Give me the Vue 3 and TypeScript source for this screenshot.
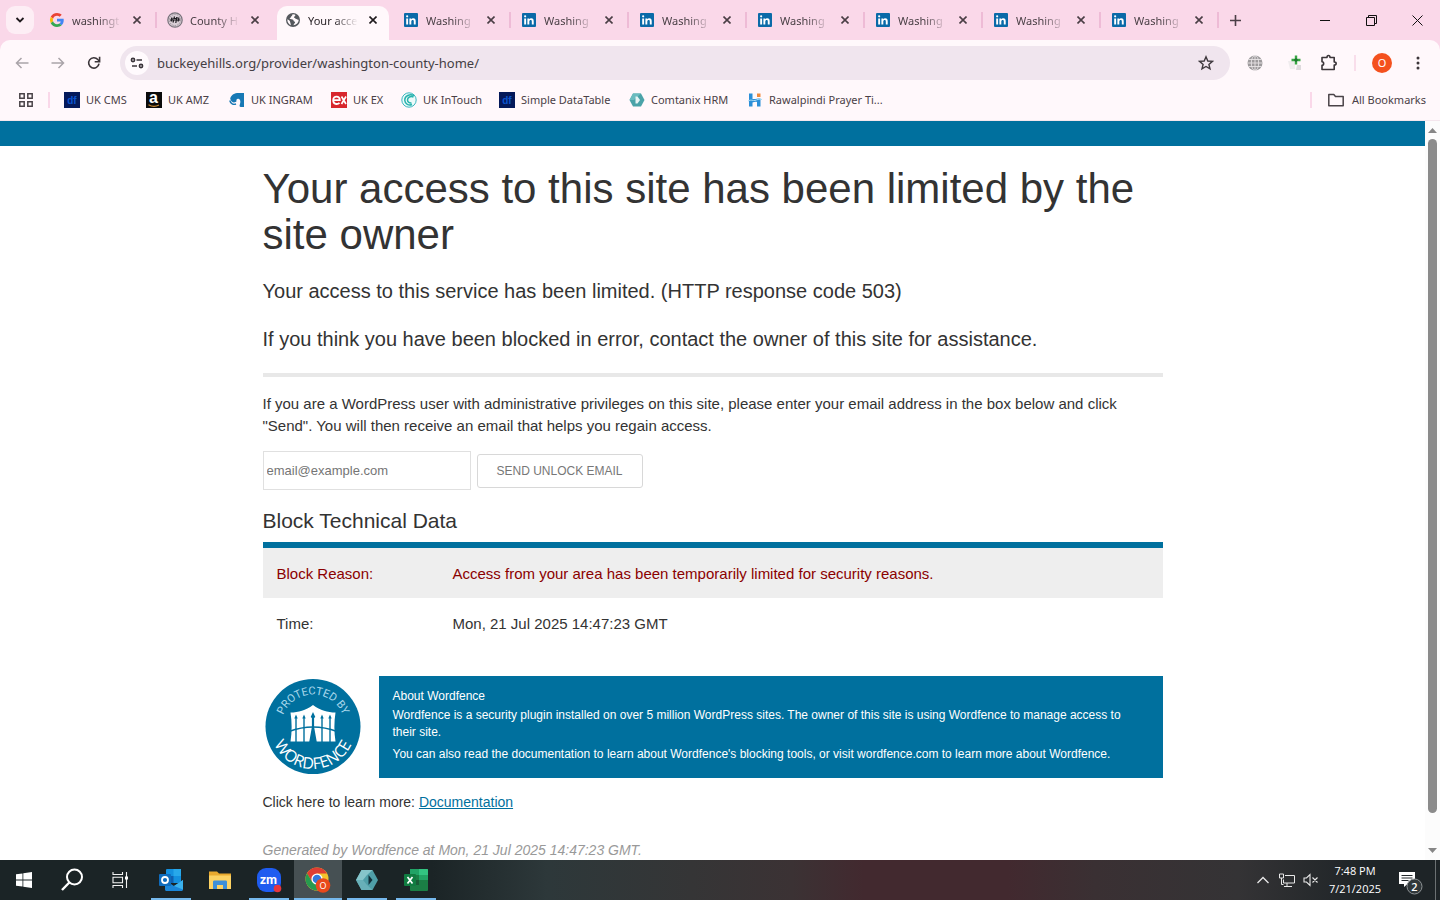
<script setup lang="ts">
import { ref } from 'vue'

interface Tab {
  id: number
  title: string
  icon: 'google' | 'county' | 'globe' | 'linkedin'
}

const tabs: Tab[] = [
  { id: 1, title: 'washingt', icon: 'google' },
  { id: 2, title: 'County H', icon: 'county' },
  { id: 3, title: 'Your acce', icon: 'globe' },
  ...Array.from({ length: 7 }, (_, i) => ({ id: i + 4, title: 'Washing', icon: 'linkedin' as const })),
]
const activeTab = ref(3)

interface Bookmark {
  label: string
  icon: 'df' | 'amazon' | 'ingram' | 'ex' | 'intouch' | 'hex' | 'prayer'
}

const bookmarks: Bookmark[] = [
  { label: 'UK CMS', icon: 'df' },
  { label: 'UK AMZ', icon: 'amazon' },
  { label: 'UK INGRAM', icon: 'ingram' },
  { label: 'UK EX', icon: 'ex' },
  { label: 'UK InTouch', icon: 'intouch' },
  { label: 'Simple DataTable', icon: 'df' },
  { label: 'Comtanix HRM', icon: 'hex' },
  { label: 'Rawalpindi Prayer Ti...', icon: 'prayer' },
]

const url = ref('buckeyehills.org/provider/washington-county-home/')
const email = ref('')
</script>

<template>
  <div class="screen">
    <header class="browser">
      <div class="tabstrip">
        <button class="tab-search" aria-label="Search tabs">
          <svg width="10" height="10" viewBox="0 0 10 10"><path d="M1.5 3l3.5 3.5L8.500 3" fill="none" stroke="#1f1a1d" stroke-width="1.800" /></svg>
        </button>
        <nav class="tabs" aria-label="Tabs">
          <div v-for="t in tabs" :key="t.id" class="tab" :class="{ active: t.id === activeTab, before: t.id === activeTab - 1 }">
            <svg v-if="t.icon === 'google'" class="fav" width="14" height="14" viewBox="0 0 48 48">
              <path fill="#EA4335" d="M24 9.500c3.500 0 6.700 1.200 9.200 3.600l6.900-6.900C35.900 2.400 30.500 0 24 0 14.600 0 6.500 5.400 2.600 13.200l8 6.200C12.400 13.700 17.700 9.500 24 9.500z" />
              <path fill="#4285F4" d="M47 24.600c0-1.600-.2-3.100-.4-4.600H24v9h12.900c-.6 3-2.200 5.500-4.800 7.200l7.700 6C44.400 38 47 31.800 47 24.600z" />
              <path fill="#FBBC05" d="M10.500 28.600a14.500 14.500 0 0 1 0-9.200l-8-6.200a24 24 0 0 0 0 21.600l8-6.200z" />
              <path fill="#34A853" d="M24 48c6.500 0 11.900-2.100 15.900-5.800l-7.700-6c-2.200 1.500-4.900 2.300-8.200 2.300-6.300 0-11.600-4.200-13.500-9.900l-8 6.200C6.500 42.600 14.600 48 24 48z" />
            </svg>
            <svg v-else-if="t.icon === 'county'" class="fav" width="16" height="16" viewBox="0 0 16 16">
              <circle cx="8" cy="8" r="7.200" fill="#d9ced6" stroke="#77727b" stroke-width="1.200" />
              <circle cx="8" cy="8" r="5.600" fill="none" stroke="#8b848c" stroke-width=".8" stroke-dasharray="1.500 1" />
              <path d="M3 8h10M4.800 5.500l-.5 4M7.500 4.500l-1.500 6M9.800 5l-1 6M12 5.500l-1 4M4 7l7-1" stroke="#1d1b20" stroke-width="1.200" fill="none" />
            </svg>
            <svg v-else-if="t.icon === 'globe'" class="fav" width="16" height="16" viewBox="0 0 24 24">
              <circle cx="12" cy="12" r="10.500" fill="#55585d" />
              <path fill="#fff8fb" d="M11.500 3.200c-1 1-.3 2.300-1.600 2.800-1.200.5-.4 2.300-2 2.500-1 .2-1.200 1.600.2 2 2.200.5 4.400.3 4.700 2.300.3 1.700 2.200 1.300 2.300 2.700.1 1.600-2 1.800-2.200 4.200 5-.6 7.700-4.300 7.700-8-1.700.2-2-1.200-3.500-1.200-1.700 0-1.700-1.600-3-1.900-1.500-.4-.3-1.700.7-2.200 1-.5 1-2.200-.3-2.500z" />
              <path fill="#fff8fb" d="M3.500 11c1.800.8 4 1.800 4.200 4 .2 1.600 1.200 2.500 1 4.700C5.300 18.400 3.300 15 3.500 11z" />
            </svg>
            <svg v-else class="fav" width="14" height="14" viewBox="0 0 14 14">
              <rect width="14" height="14" rx="1" fill="#0a6aa8" />
              <path d="M2.200 5.400h1.900v6.200H2.200zM5.400 5.400h1.800v.9c.4-.7 1.100-1.100 2-1.100 1.900 0 2.500 1.200 2.500 3v3.400H9.800V8.500c0-.9-.2-1.600-1.100-1.600S7.300 7.600 7.300 8.500v3.100H5.400z" fill="#fff" />
              <circle cx="3.150" cy="3.300" r="1.100" fill="#fff" />
            </svg>
            <span class="tab-title">{{ t.title }}</span>
            <button class="tab-close" :aria-label="`Close ${t.title}`">
              <svg width="8" height="8" viewBox="0 0 8 8"><path d="M.5 .5l7 7M7.500 .5l-7 7" stroke="currentColor" stroke-width="1.600" /></svg>
            </button>
          </div>
        </nav>
        <button class="new-tab" aria-label="New tab">
          <svg width="11" height="11" viewBox="0 0 11 11"><path d="M5.500 0v11M0 5.500h11" stroke="#4b3f47" stroke-width="1.600" /></svg>
        </button>
        <div class="window-controls">
          <button aria-label="Minimize"><svg width="10" height="10" viewBox="0 0 10 10"><path d="M0 5.500h10" stroke="#111" /></svg></button>
          <button aria-label="Restore"><svg width="11" height="11" viewBox="0 0 11 11"><path d="M.5 2.500h8v8h-8zM2.500 2.500v-2h8v8h-2" fill="none" stroke="#111" /></svg></button>
          <button aria-label="Close window"><svg width="11" height="11" viewBox="0 0 11 11"><path d="M.5 .5l10 10M10.500 .5l-10 10" stroke="#111" /></svg></button>
        </div>
      </div>

      <div class="toolbar">
        <button class="tool wide" aria-label="Back"><svg width="14" height="12" viewBox="0 0 14 12"><path d="M13.500 6H1.500M6.500 1l-5 5 5 5" fill="none" stroke="#aaa4a9" stroke-width="1.500" /></svg></button>
        <button class="tool wide" aria-label="Forward"><svg width="14" height="12" viewBox="0 0 14 12"><path d="M.5 6h12M7.500 1l5 5-5 5" fill="none" stroke="#aaa4a9" stroke-width="1.500" /></svg></button>
        <button class="tool wide" aria-label="Reload"><svg width="14" height="14" viewBox="0 0 14 14"><path d="M12 7.600A5.200 5.200 0 1 1 10.800 3.500L12.500 5.200" fill="none" stroke="#3c363a" stroke-width="1.600" /><path d="M12.600 .8v4.900H7.700" fill="none" stroke="#3c363a" stroke-width="1.600" /></svg></button>
        <div class="omnibox">
          <button class="site-info" aria-label="Site information">
            <svg width="14" height="12" viewBox="0 0 14 12"><g fill="none" stroke="#3a343a" stroke-width="1.600"><circle cx="3" cy="3" r="1.600" /><path d="M6.500 3H12M2 9h5" /><circle cx="11" cy="9" r="1.600" /></g></svg>
          </button>
          <label class="sr" for="address">Address</label>
          <div class="url">
            <input id="address" v-model="url" type="text" spellcheck="false" />
          </div>
          <button class="star" aria-label="Bookmark this tab">
            <svg width="16" height="16" viewBox="0 0 16 16"><path d="M8 1.800l1.800 4.200 4.600.4-3.500 3 1.100 4.500L8 11.500 4 13.900l1.100-4.500-3.500-3 4.600-.4z" fill="none" stroke="#3f393e" stroke-width="1.400" /></svg>
          </button>
        </div>
        <div class="extensions">
          <button class="tool ext" aria-label="Web extension">
            <svg width="16" height="16" viewBox="0 0 16 16"><circle cx="8" cy="8" r="7.500" fill="#9d9a9c" /><g fill="none" stroke="#e9e4e7" stroke-width=".9"><ellipse cx="8" cy="8" rx="3.700" ry="7.500" /><path d="M8 .5v15M.5 8h15M1.500 4.500h13M1.500 11.500h13" /></g></svg>
          </button>
          <button class="tool ext" aria-label="Add-on">
            <svg width="16" height="16" viewBox="0 0 16 16"><path d="M1 6h7v8H3z" fill="#f0ecee" /><path d="M10 10h4v5h-5z" fill="#dedadd" /><path d="M9 .5v9M4.500 5h9" stroke="#39a644" stroke-width="2.400" /><path d="M9 3v4M7 5h4" stroke="#16662a" /></svg>
          </button>
          <button class="tool small" aria-label="Extensions">
            <svg width="18" height="18" viewBox="0 0 18 18"><path d="M2 3.500h5c0-2.600 3-2.600 3 0h4.200v4.500c2.600 0 2.600 3 0 3v4.500H2v-4.200c2.200 0 2.200-3.600 0-3.600z" fill="none" stroke="#3c363a" stroke-width="1.600" stroke-linejoin="round" /></svg>
          </button>
          <span class="divider"></span>
          <button class="tool small" aria-label="Profile"><span class="avatar">O</span></button>
          <button class="tool small menu" aria-label="Menu"><svg width="4" height="14" viewBox="0 0 4 14"><g fill="#3c363a"><circle cx="2" cy="2" r="1.500" /><circle cx="2" cy="7" r="1.500" /><circle cx="2" cy="12" r="1.500" /></g></svg></button>
        </div>
      </div>

      <div class="bookmarks">
        <button class="apps" aria-label="Apps"><svg width="14" height="14" viewBox="0 0 14 14"><path d="M.8 .8h4.400v4.400H.8zM8.800 .8h4.400v4.400H8.800zM.8 8.800h4.400v4.400H.8zM8.800 8.800h4.400v4.400H8.800z" fill="none" stroke="#4a4348" stroke-width="1.500" /></svg></button>
        <nav class="bookmark-list" aria-label="Bookmarks">
          <a v-for="b in bookmarks" :key="b.label" href="#" class="bookmark">
            <svg v-if="b.icon === 'df'" width="16" height="16" viewBox="0 0 16 16"><rect width="16" height="16" fill="#04195a" /><text x="8" y="11.500" text-anchor="middle" font-family="Liberation Sans, sans-serif" font-size="10" font-weight="700" fill="#0b54d0">df</text></svg>
            <svg v-else-if="b.icon === 'amazon'" width="16" height="16" viewBox="0 0 16 16"><rect width="16" height="16" fill="#0b0b0b" /><text x="7.500" y="11" text-anchor="middle" font-family="Liberation Sans, sans-serif" font-size="16" font-weight="700" fill="#fff">a</text><path d="M2.500 12.800c3.500 2 7.500 1.900 10.500.2" fill="none" stroke="#c98a34" stroke-width="1.100" /></svg>
            <svg v-else-if="b.icon === 'ingram'" width="16" height="16" viewBox="0 0 16 16"><path d="M1.200 6.500C2.500 2.500 5.500 1 9.500 1H15v14h-2.500c-2.500 0-2-1.500-1.500-3 .7-2 .5-4.500-1-5C8 6.400 7 7.500 7.500 9.300 6.500 11 2 11.500 1.200 6.500z" fill="#1779b5" /><path d="M.8 8.500c.8 3.500 3.500 4.500 6.200 3.500" stroke="#1779b5" stroke-width="1.400" fill="none" /></svg>
            <svg v-else-if="b.icon === 'ex'" width="16" height="16" viewBox="0 0 16 16"><rect width="16" height="16" fill="#d8272d" /><path d="M2.500 8.200h6.300C8.800 3.300 2.200 3.300 2.200 8.200c0 4.300 4.300 4.600 6.300 2.600" fill="none" stroke="#fff" stroke-width="1.800" /><path d="M10.500 4.500l4.500 7.500M10.500 12L15 4.500" stroke="#fff" stroke-width="1.700" /></svg>
            <svg v-else-if="b.icon === 'intouch'" width="16" height="16" viewBox="0 0 16 16"><circle cx="8" cy="8" r="7.200" fill="#ecfafa" stroke="#3bb7c0" /><path d="M13 3.500C9 1.800 3.500 3.500 3.800 8.500c.2 3.500 4 5.300 7.200 4M12.500 5C9.500 4 6.500 5 6.500 8c0 2.300 2 3.300 4 3" fill="none" stroke="#27b3ad" stroke-width="1.500" /></svg>
            <svg v-else-if="b.icon === 'hex'" width="16" height="16" viewBox="0 0 16 16"><path d="M4 1.500h8L15.500 8 12 14.500H4L.5 8z" fill="#4aa3a8" /><path d="M4 1.500h8L8 5 5 8 .5 8z" fill="#6bbcbf" /><path d="M8.500 4.500L11 8l-2.500 3.500H6.500V4.500z" fill="#e6f4f4" /></svg>
            <svg v-else width="16" height="16" viewBox="0 0 16 16"><path d="M2 1.500h3.500V7c4 .3 5.500-1 8-.500V14.500H10V10c-2-.5-3 .2-4.500.5v4H2z" fill="#2b8fd8" /><path d="M10 1.500h3.500V5H10z" fill="#f08a3c" /><path d="M1 9c3-2 5 0 7-.5 2-.6 4-2 7-1" fill="none" stroke="#a9dcf5" /></svg>
            <span>{{ b.label }}</span>
          </a>
        </nav>
        <a href="#" class="all-bookmarks">
          <svg width="16" height="14" viewBox="0 0 16 14"><path d="M.8 1.500h5l1.700 2h7.700v9.300H.8z" fill="none" stroke="#4a4348" stroke-width="1.500" stroke-linejoin="round" /></svg>
          <span>All Bookmarks</span>
        </a>
      </div>
    </header>

    <div class="viewport">
      <main class="page">
        <div class="content">
          <h1>Your access to this site has been limited by the site owner</h1>
          <p class="lead">Your access to this service has been limited. (HTTP response code 503)</p>
          <p class="lead">If you think you have been blocked in error, contact the owner of this site for assistance.</p>
          <hr />
          <p class="body">If you are a WordPress user with administrative privileges on this site, please enter your email address in the box below and click "Send". You will then receive an email that helps you regain access.</p>
          <form class="unlock" @submit.prevent>
            <label class="sr" for="email">Email address</label>
            <input id="email" v-model="email" type="email" placeholder="email@example.com" />
            <button type="submit">SEND UNLOCK EMAIL</button>
          </form>
          <h2>Block Technical Data</h2>
          <table class="data">
            <tbody>
              <tr class="reason"><th scope="row">Block Reason:</th><td>Access from your area has been temporarily limited for security reasons.</td></tr>
              <tr><th scope="row">Time:</th><td>Mon, 21 Jul 2025 14:47:23 GMT</td></tr>
            </tbody>
          </table>
          <section class="about">
            <svg class="badge" width="100" height="102" viewBox="0 0 100 102" role="img" aria-label="Protected by Wordfence">
              <defs>
                <path id="arc-top" d="M18 50.500a32 32 0 0 1 64 0" />
                <path id="arc-bottom" d="M6.500 39a43.500 43.500 0 1 0 87 0" />
              </defs>
              <circle cx="50" cy="50.500" r="47.500" fill="#00709e" />
              <text class="arc small-arc"><textPath href="#arc-top" startOffset="50%" text-anchor="middle">PROTECTED BY</textPath></text>
              <text class="arc big-arc"><textPath href="#arc-low" startOffset="50%" text-anchor="middle">WORDFENCE</textPath></text>
              <path id="arc-low" d="M7.500 50.500a42.500 42.500 0 0 0 85 0" fill="none" />
              <path d="M27.500 36.500c8 0 15-2 22.500-7.500 7.500 5.500 14.500 7.500 22.500 7.500-1.500 10-1.500 19 0 29h-45c1.500-10 1.500-19 0-29z" fill="#fff" />
              <g fill="none" stroke="#00709e" stroke-width="1.400">
                <path d="M33 42v24M41 42v24M59 42v24M67 42v24" />
                <path d="M26 55.500c16-6 32-6 48 0" stroke-width="1.500" />
              </g>
              <path d="M50 36l2.300 5-1.200 1v9l2.700 15h-7.600l2.700-15v-9l-1.200-1zM33 38.500l1.700 4h-3.400zM41 38.500l1.700 4h-3.400zM59 38.500l1.700 4h-3.400zM67 38.500l1.700 4h-3.400z" fill="#00709e" />
            </svg>
            <div class="about-text">
              <h3>About Wordfence</h3>
              <p>Wordfence is a security plugin installed on over 5 million WordPress sites. The owner of this site is using Wordfence to manage access to their site.</p>
              <p>You can also read the documentation to learn about Wordfence's blocking tools, or visit wordfence.com to learn more about Wordfence.</p>
            </div>
          </section>
          <p class="docs">Click here to learn more: <a href="#">Documentation</a></p>
          <p class="generated">Generated by Wordfence at Mon, 21 Jul 2025 14:47:23 GMT.</p>
        </div>
      </main>
      <div class="scrollbar" aria-hidden="true">
        <svg width="9" height="5" viewBox="0 0 9 5"><path d="M4.500 0L9 5H0z" fill="#868686" /></svg>
        <span class="thumb"></span>
        <svg width="9" height="5" viewBox="0 0 9 5"><path d="M0 0h9L4.500 5z" fill="#868686" /></svg>
      </div>
    </div>

    <footer class="taskbar">
      <button aria-label="Start"><svg width="16" height="16" viewBox="0 0 16 16"><path d="M0 2.300l6.500-.9v6.100H0zM7.300 1.300L16 0v7.500H7.300zM0 8.400h6.500v6.200L0 13.700zM7.300 8.400H16V16l-8.700-1.200z" fill="#fff" /></svg></button>
      <button aria-label="Search"><svg width="24" height="24" viewBox="0 0 24 24"><circle cx="14.500" cy="9" r="7.500" fill="none" stroke="#fff" stroke-width="2" /><path d="M9.300 14.500L2 22" stroke="#fff" stroke-width="2.400" /></svg></button>
      <button aria-label="Task view"><svg width="16" height="16" viewBox="0 0 16 16"><path d="M1 0v2.500h9.500V0M1 16v-2.500h9.500V16M1 5.200h9.500v5.600H1zM14.500 0v16" fill="none" stroke="#f2f2f2" stroke-width="1.100" /><path d="M13 4.500h3v3h-3z" fill="#fff" /></svg></button>
      <div class="apps-running">
        <button class="running" aria-label="Outlook">
          <svg width="24" height="22" viewBox="0 0 24 22"><rect x="7" y="0" width="15" height="14" rx="1" fill="#1490df" /><path d="M14.500 0H22v7h-7.500z" fill="#28a8ea" /><path d="M7 7h7.500v7H7z" fill="#0f5fb0" /><path d="M6 11l9 6 9-6v9.500c0 .8-.7 1.500-1.500 1.500h-15C6.700 22 6 21.300 6 20.500z" fill="#1a86d9" /><path d="M24 11v9.500L15 17z" fill="#3bb2ee" /><rect x="0" y="5" width="12" height="12" rx="1" fill="#0f6cbd" /><circle cx="6" cy="11" r="3" fill="none" stroke="#fff" stroke-width="1.800" /></svg>
        </button>
        <button aria-label="File Explorer">
          <svg width="22" height="20" viewBox="0 0 22 20"><path d="M0 1.500h8l2 2h12V19H0z" fill="#e9a92e" /><path d="M0 5.500h22V19H0z" fill="#fcd263" /><path d="M4 19v-7c0-1 .6-1.500 1.500-1.500h11c1 0 1.500.5 1.500 1.500v7h-4v-4H8v4z" fill="#3d8fd8" /></svg>
        </button>
        <button class="running" aria-label="Zoom">
          <svg width="26" height="26" viewBox="0 0 26 26"><rect x="1" y="1" width="24" height="24" rx="9" fill="#1f5cf0" /><text x="12.500" y="16.500" text-anchor="middle" font-family="Lato, sans-serif" font-weight="900" font-size="13" fill="#fff">zm</text><circle cx="21.500" cy="21.500" r="3.800" fill="#e8363d" /></svg>
        </button>
        <button class="running current" aria-label="Chrome">
          <svg width="26" height="26" viewBox="0 0 26 26"><circle cx="12" cy="12" r="11.500" fill="#f4c22c" /><path d="M12 .5A11.500 11.500 0 0 0 2 6.300L7 15l5-8.500h10A11.500 11.500 0 0 0 12 .5z" fill="#df3d33" /><path d="M2 6.300a11.500 11.500 0 0 0 9.500 17.200l5-8.700H7z" fill="#279b4f" /><circle cx="12" cy="12" r="5.600" fill="#fff" /><circle cx="12" cy="12" r="4.300" fill="#3477dc" /><circle cx="18" cy="18.500" r="7.300" fill="#e9491b" /><text x="18" y="22" text-anchor="middle" font-family="Open Sans, sans-serif" font-size="9" fill="#fff">O</text></svg>
        </button>
        <button class="running" aria-label="Comtanix">
          <svg width="22" height="20" viewBox="0 0 22 20"><path d="M5.500 0h11L22 10l-5.500 10h-11L0 10z" fill="#4f9fa8" /><path d="M5.500 0h11L11 5l-4 5H0z" fill="#86c5cb" /><path d="M0 10h7l4 5 5.500 5h-11z" fill="#68b0b8" /><path d="M12.500 5v10l4-5z" fill="#12303a" /></svg>
        </button>
        <button class="running" aria-label="Excel">
          <svg width="24" height="22" viewBox="0 0 24 22"><rect x="6" width="18" height="22" rx="1" fill="#1b7f45" /><path d="M6 0h9v6H6z" fill="#21a366" /><path d="M15 0h8c.6 0 1 .4 1 1v5h-9z" fill="#33c481" /><path d="M15 6h9v5h-9z" fill="#22a465" /><path d="M6 11h9v5H6z" fill="#185c37" /><rect y="5" width="12" height="12" rx="1" fill="#107c41" /><path d="M3.500 8l5 6.500M8.500 8l-5 6.500" stroke="#fff" stroke-width="1.700" /></svg>
        </button>
      </div>
      <div class="tray">
        <button aria-label="Show hidden icons"><svg width="12" height="8" viewBox="0 0 12 8"><path d="M.5 7L6 1.500 11.500 7" fill="none" stroke="#e8e8e8" stroke-width="1.300" /></svg></button>
        <button aria-label="Network"><svg width="16" height="14" viewBox="0 0 16 14"><path d="M6 2.500h9.500v7.500H4.500V6.500M8 10v3M5 13.500h8M.5 1h4v4h-4zM2.500 5v6.500h2" fill="none" stroke="#e8e8e8" /></svg></button>
        <button aria-label="Volume muted"><svg width="16" height="14" viewBox="0 0 16 14"><path d="M1 5v4h2.500L7 12.500v-11L3.500 5zM9.500 4.500l5 5M14.500 4.500l-5 5" fill="none" stroke="#e8e8e8" stroke-width="1.100" /></svg></button>
        <div class="clock"><time>7:48 PM</time><time>7/21/2025</time></div>
        <button class="notify" aria-label="Notifications">
          <svg width="26" height="30" viewBox="0 -4 26 30"><path d="M1 3h16v12H9.500L6 18v-3H1z" fill="#fff" /><path d="M3.500 6.500h11M3.500 9h11M3.500 11.500h7" stroke="#23292c" /><circle cx="16.500" cy="17.500" r="7.500" fill="#30373a" stroke="#8d9294" /><text x="16.500" y="21.500" text-anchor="middle" font-family="Open Sans, sans-serif" font-weight="600" font-size="11" fill="#fff">2</text></svg>
        </button>
        <span class="show-desktop"></span>
      </div>
    </footer>
  </div>
</template>

<style>
html, body { margin: 0; overflow: hidden; }
</style>

<style scoped>
* { box-sizing: border-box; }
button { border: 0; padding: 0; background: none; font: inherit; color: inherit; display: flex; align-items: center; justify-content: center; }
.sr { position: absolute; width: 1px; height: 1px; overflow: hidden; clip-path: inset(50%); }
.screen { display: flex; flex-direction: column; height: 100vh; background: #fff; font-family: "Liberation Sans", Arial, sans-serif; }
svg { flex: none; display: block; }

.browser { font-family: "Noto Sans", "Open Sans", sans-serif; font-size: 11px; color: #4a4046; background: #fad8e9; }
.tabstrip { display: flex; height: 40px; align-items: center; }
.tab-search { width: 28px; height: 28px; margin: 0 5px 0 6px; border-radius: 9px; background: #fdeef5; flex: none; }
.tabs { display: flex; align-self: stretch; flex: 0 1 1180px; min-width: 0; }
.tab { position: relative; flex: 1 1 0; min-width: 0; display: flex; align-items: center; padding: 0 12px 0 10px; }
.tab::after { content: ""; position: absolute; right: 0; top: 12px; width: 2px; height: 16px; background: #eebbd6; }
.tab.active::after, .tab.before::after { display: none; }
.tab > * { position: relative; }
.fav { width: 16px; }
.tab-title { flex: 1; min-width: 0; margin-left: 7px; white-space: nowrap; mask-image: linear-gradient(90deg, #000 50%, transparent 96%); }
.tab-close { width: 16px; height: 16px; margin-left: 5px; flex: none; color: #4a3e45; }
.tab.active { color: #2b2529; }
.tab.active .tab-close { color: #1f1a1d; }
.tab.active::before { content: ""; position: absolute; left: 2px; right: 4px; top: 6px; bottom: 0; background: #fff8fb; border-radius: 10px 10px 0 0; }
.new-tab { width: 28px; height: 28px; margin-left: 2px; flex: none; }
.window-controls { display: flex; margin-left: auto; align-self: stretch; }
.window-controls button { width: 46px; }

.toolbar { display: flex; align-items: center; height: 46px; padding: 0 8px 0 4px; background: #fff8fb; border-radius: 10px 10px 0 0; }
.tool { height: 28px; flex: none; }
.tool.wide { width: 36px; }
.tool.ext { width: 40px; }
.tool.small { width: 28px; }
.tool.menu { margin-left: 8px; }
.omnibox { flex: 1; display: flex; align-items: center; height: 34px; margin: 0 5px 0 8px; padding: 0 10px 0 5px; border-radius: 17px; background: #f0e5ee; }
.site-info { width: 24px; height: 24px; border-radius: 50%; background: #fffafd; flex: none; }
.url { flex: 1; margin-left: 8px; }
.url input { width: 100%; border: 0; padding: 0; outline: 0; background: none; font: 13px/20px "Noto Sans", "Open Sans", sans-serif; color: #443e44; display: block; }
.star { width: 28px; height: 28px; }
.extensions { display: flex; align-items: center; }
.divider { width: 2px; height: 16px; margin: 0 12px 0 11px; background: #f9deeb; }
.avatar { width: 20px; height: 20px; border-radius: 50%; background: #f4511e; color: #fff; font-size: 11px; line-height: 20px; text-align: center; }

.bookmarks { display: flex; align-items: center; height: 35px; padding: 0 14px 7px 12px; background: #fff8fb; border-bottom: 1px solid #f4e6ed; }
.apps { width: 28px; height: 28px; flex: none; }
.bookmark-list { display: grid; grid-template-columns: 82px 83px 102px 70px 98px 130px 118px auto; margin-left: 8px; padding-left: 14px; border-left: 2px solid #fad8e9; }
.bookmark, .all-bookmarks { display: flex; align-items: center; gap: 6px; color: inherit; text-decoration: none; white-space: nowrap; line-height: 16px; }
.all-bookmarks { margin-left: auto; padding-left: 16px; gap: 8px; border-left: 2px solid #fad8e9; }

.viewport { flex: 1; min-height: 0; display: flex; }
.page { flex: 1; min-width: 0; overflow: hidden; border-top: 25px solid #00709e; color: #333; }
.content { max-width: 900px; margin: 0 auto; padding-top: 20px; }
h1 { margin: 0; font-size: 42px; line-height: 46px; font-weight: 400; }
.lead { margin: 21px 0 0; font-size: 20px; line-height: 24px; }
.lead + .lead { margin-top: 24px; }
hr { height: 4px; margin: 22px 0 16px; border: 0; background: #e8e8e8; }
.body { margin: 0; font-size: 15px; line-height: 22px; }
.unlock { display: flex; align-items: center; gap: 6px; margin-top: 14px; }
.unlock input { width: 208px; height: 39px; padding: 0 3px; border: 1px solid #e0e0e0; font: 13px "Liberation Sans", Arial, sans-serif; color: #333; }
.unlock input::placeholder { color: #757575; opacity: 1; }
.unlock button { width: 166px; height: 34px; border: 1px solid #d8d8d8; border-radius: 3px; background: #fff; font-size: 12px; color: #777; }
h2 { margin: 19px 0 9px; font-size: 21px; line-height: 24px; font-weight: 400; }
.data { width: 100%; border-collapse: separate; border-spacing: 0; border-top: 6px solid #00709e; font-size: 15px; }
.data th, .data td { height: 50px; padding: 0 14px; text-align: left; font-weight: 400; }
.data th { width: 176px; }
.reason { background: #eee; color: #8b0000; }
.about { display: flex; gap: 16px; margin-top: 28px; }
.arc { fill: #fff; }
.small-arc { font-family: Roboto, sans-serif; font-size: 11px; fill: #a9d8ec; }
.big-arc { font-family: "Open Sans", sans-serif; font-size: 16px; }
.about-text { flex: 1; padding: 12px 26px 10px 14px; background: #00709e; color: #fff; font-size: 12px; line-height: 17px; }
.about-text h3 { margin: 0 0 2px; font-size: 12px; font-weight: 400; }
.about-text p { margin: 0 0 5px; }
.docs, .generated { margin: 16px 0 0; font-size: 14px; line-height: 16px; }
.docs a { color: #00709e; }
.generated { margin-top: 32px; font-style: italic; color: #999; }

.scrollbar { width: 15px; display: flex; flex-direction: column; align-items: center; padding: 7px 0; background: #fcfcfc; }
.thumb { width: 9px; flex: 0 1 93%; margin: 6px 0 auto; border-radius: 5px; background: #8b8b8b; }

.taskbar { display: flex; height: 40px; flex: none; background: linear-gradient(90deg, #1b2426 0, #1b2426 30%, #2d383a 38%, #353536 48%, #3b3234 55%, #42292f 60%, #42292f 70%, #3a3033 76%, #343335 86%, #1e2427 95%); color: #fff; }
.taskbar > button, .apps-running button { width: 48px; height: 40px; }
.apps-running { display: flex; gap: 1px; margin-left: 3px; }
.running { position: relative; }
.running::after { content: ""; position: absolute; left: 4px; right: 4px; bottom: 0; height: 2px; background: #76b9ed; }
.running.current { background: #465053; }
.running.current::after { left: 0; right: 0; }
.tray { display: flex; align-items: center; margin-left: auto; font: 11px/18px "Open Sans", "Noto Sans", sans-serif; }
.tray > button { width: 24px; height: 40px; }
.clock { width: 64px; display: flex; flex-direction: column; align-items: center; }
.tray .notify { width: 48px; }
.show-desktop { width: 5px; height: 40px; border-left: 1px solid #6b7072; }
</style>
